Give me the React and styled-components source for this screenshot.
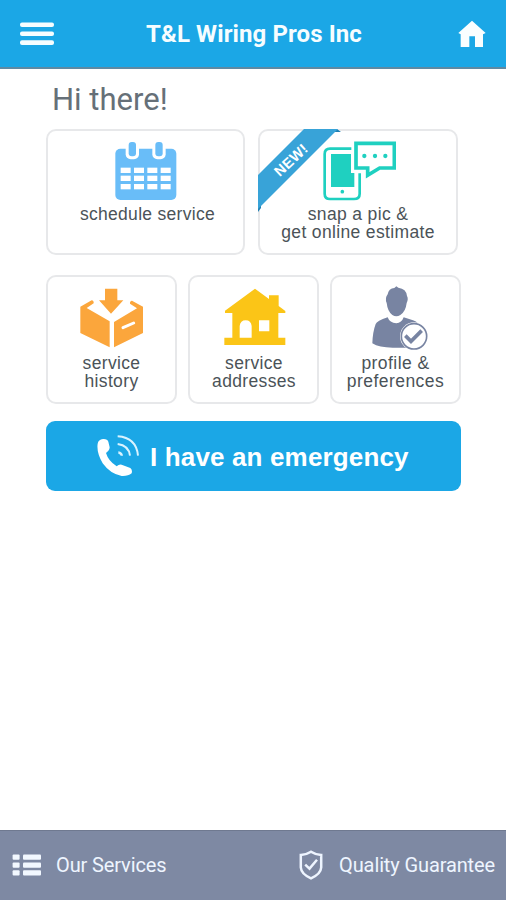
import React from 'react';
import styled, { createGlobalStyle } from 'styled-components';

const GlobalStyle = createGlobalStyle`
    * {
        box-sizing: border-box;
    }

    body {
        margin: 0;
        background: #ffffff;
    }
`;

const Screen = styled.div`
    display: flex;
    flex-direction: column;
    width: 506px;
    height: 900px;
    overflow: hidden;
    font-family: Roboto, sans-serif;
`;

const Header = styled.header`
    display: flex;
    align-items: center;
    justify-content: space-between;
    height: 69px;
    padding: 0 20px;
    background: #1ba7e6;
    border-bottom: 2px solid #5f8aa3;
`;

const Title = styled.h1`
    margin: 0 4px 0 0;
    font-size: 24px;
    line-height: 28px;
    font-weight: 700;
    letter-spacing: 0.1px;
    color: #f6fdff;
`;

const IconButton = styled.button`
    display: flex;
    padding: 0;
    border: 0;
    background: none;
`;

const Content = styled.main`
    flex: 1;
    padding: 13px 45px 0 46px;
`;

const Greeting = styled.h2`
    margin: 0 0 11px 6px;
    font-size: 31px;
    line-height: 36px;
    font-weight: 400;
    color: #667078;
`;

const CardRow = styled.div`
    display: grid;
    grid-template-columns: ${({ $columns }) => $columns};
    grid-auto-rows: ${({ $height }) => $height};
    gap: ${({ $gap }) => $gap};
    margin-bottom: ${({ $bottom }) => $bottom};
`;

const Card = styled.div`
    position: relative;
    display: flex;
    flex-direction: column;
    align-items: center;
    padding-top: ${({ $top }) => $top};
    border: 2px solid #e7e8ea;
    border-radius: 10px;
    background: #ffffff;

    > svg {
        flex-shrink: 0;
        margin-left: ${({ $nudge }) => $nudge || '0'};
    }
`;

const Label = styled.span`
    margin-top: ${({ $offset }) => $offset || '5px'};
    padding-left: ${({ $indent }) => $indent || '0'};
    font-family: "Liberation Sans", Arial, sans-serif;
    font-size: 17.5px;
    line-height: 17.5px;
    letter-spacing: ${({ $spacing }) => $spacing || '0.35px'};
    text-align: center;
    white-space: pre;
    color: #4b5358;
`;

const Ribbon = styled.div`
    position: absolute;
    top: -2px;
    left: -2px;
    width: 84px;
    height: 84px;

    span {
        position: absolute;
        top: 22px;
        left: 6px;
        width: 54px;
        font: 700 14.5px/18px "Liberation Sans", Arial, sans-serif;
        letter-spacing: 0.3px;
        text-align: center;
        color: #ffffff;
        transform: rotate(-43deg);
    }
`;

const EmergencyButton = styled.button`
    display: flex;
    align-items: center;
    width: 415px;
    height: 70px;
    padding: 0 0 0 51px;
    border: 0;
    border-radius: 9px;
    background: #1ba7e6;
    font: 700 26px/30px "Liberation Sans", Arial, sans-serif;
    letter-spacing: 0.15px;
    white-space: nowrap;
    color: #ffffff;

    span {
        margin-left: 11px;
        padding-top: 1px;
    }
`;

const Footer = styled.footer`
    display: flex;
    align-items: center;
    justify-content: space-between;
    height: 70px;
    padding: 0 11px 1px 12px;
    background: #7e89a3;
    border-top: 1px solid #6f7990;
`;

const FooterLink = styled.a`
    display: flex;
    align-items: center;
    gap: ${({ $gap }) => $gap};
    font-size: 20px;
    line-height: 24px;
    letter-spacing: -0.12px;
    color: #eef5ff;
`;

const MenuIcon = () => (
    <svg width="34" height="24" viewBox="0 0 34 24" fill="#f6fdff">
        <rect y="0.5" width="34" height="4.6" rx="2" />
        <rect y="9.4" width="34" height="4.6" rx="2" />
        <rect y="18.3" width="34" height="4.6" rx="2" />
    </svg>
);

const HomeIcon = () => (
    <svg width="28" height="28" viewBox="617 58 84 84" fill="#fafeff">
        <path d="M659 60L700 97L692 101V139H668V107H651V139H625V101L618 97Z" />
    </svg>
);

const CalendarIcon = () => (
    <svg width="62" height="60" viewBox="0 0 186 180">
        <rect x="1" y="23" width="183" height="154" rx="15" fill="#69bdf8" />
        {[52, 132].map(x => (
            <g key={x}>
                <rect x={x - 20} y="-6" width="40" height="61" rx="15" fill="#fff" />
                <rect x={x - 11} y="3" width="22" height="43" rx="9" fill="#69bdf8" />
            </g>
        ))}
        {[80, 104, 129].map(y => [17, 57, 97, 137].map(x => (
            <rect key={`${x}-${y}`} x={x} y={y} width="30" height="16" fill="#fff" />
        )))}
    </svg>
);

const SnapIcon = () => (
    <svg width="73" height="60" viewBox="219 61 219 180" fill="#1fd0c0">
        <path d="M304 84H240Q224 84 224 100V219Q224 235 240 235H312Q329 235 329 219V158" fill="none" stroke="#1fd0c0" strokeWidth="8" />
        <path d="M243 100H303V157H313V199H243Z" />
        <circle cx="277" cy="213" r="5.5" />
        <path d="M318 68H433V142H389L353 164V142H318Z" fill="#fff" stroke="#1fd0c0" strokeWidth="11" />
        <circle cx="343" cy="106" r="6.5" />
        <circle cx="375" cy="106" r="6.5" />
        <circle cx="406" cy="106" r="6.5" />
    </svg>
);

const BoxIcon = () => (
    <svg width="64" height="60" viewBox="118 60 192 180" fill="#fba63c">
        <path d="M193 62H230V97H248L211 137L175 97H193Z" />
        <path d="M119 116L153 97Q160 98 159 106L138 120L207 160V238L119 195Z" />
        <path d="M220 162L289 121L268 107Q267 99 274 98L307 116V195L220 238Z" />
        <path d="M247 179L279 165" stroke="#fff" strokeWidth="9" strokeLinecap="round" />
    </svg>
);

const HouseIcon = () => (
    <svg width="62" height="58" viewBox="122 58 186 174" fill="#fbc517">
        <path fillRule="evenodd" d="M215 60L257 91V80H286V112L306 127V133H285V207H306V229H123V207H147V133H125V126ZM169 207H205V172Q203 155 187 155Q171 155 169 172ZM227 155V188H258V155Z" />
    </svg>
);

const ProfileIcon = () => (
    <svg width="56" height="64" viewBox="143 52 168 192" fill="#7884a2">
        <path d="M190 77Q193 59 210 58L216 53L222 57Q246 60 248 82Q253 91 247 103Q244 129 228 139Q216 147 204 139Q190 129 187 103Q181 88 190 77Z" />
        <path d="M190 146Q196 163 216 164Q232 163 238 146L266 155Q286 160 287 183V237H205Q164 237 144 224Q145 190 154 166Q157 157 190 146Z" />
        <circle cx="269" cy="203" r="42" fill="#fff" />
        <circle cx="269" cy="203" r="38" fill="#fff" stroke="#7884a2" strokeWidth="5" />
        <path d="M243 201L260 218L292 186" fill="none" stroke="#7884a2" strokeWidth="11" />
    </svg>
);

const CallIcon = () => (
    <svg width="42" height="42" viewBox="170 70 126 126">
        <path d="M172 96Q174 84 188 82Q201 81 204 90L208 107Q208 116 197 124Q204 148 229 164Q236 157 244 159L270 169Q277 174 274 185Q263 194 244 193Q210 187 187 155Q168 122 172 96Z" fill="#fff" />
        <g fill="none" stroke="#d9f3ff" strokeWidth="6">
            <path d="M232 74Q288 78 293 132" />
            <path d="M232 97Q265 101 269 132" />
        </g>
        <path d="M234 119Q247 121 248 132L241 132Q240 127 234 126Z" fill="#d9f3ff" />
    </svg>
);

const ListIcon = () => (
    <svg width="29" height="22" viewBox="0 0 29 22" fill="#f2f8ff">
        {[0.5, 8.5, 16.3].map(y => (
            <g key={y}>
                <rect x="0.6" y={y} width="7" height="5.2" rx="1" />
                <rect x="11" y={y} width="18" height="5.2" rx="1" />
            </g>
        ))}
    </svg>
);

const ShieldIcon = () => (
    <svg width="24" height="30" viewBox="0 0 24 30" fill="none" stroke="#eef5ff">
        <path d="M12 1.8Q16.5 4.8 22.2 4.9V17.5Q21.8 24 12 28.3Q2.2 24 1.8 17.5V4.9Q7.5 4.8 12 1.8Z" strokeWidth="2.5" />
        <path d="M6.2 14.6L10.5 18.6L18 9.8" strokeWidth="2.5" />
    </svg>
);

const NewRibbon = () => (
    <Ribbon>
        <svg width="84" height="84" viewBox="0 0 84 84">
            <path d="M73 0H79L83 3H74ZM0 73V83L3 79V74Z" fill="#2180b3" />
            <path d="M46 0H80L0 80V46Z" fill="#38a3d8" />
        </svg>
        <span>NEW!</span>
    </Ribbon>
);

const App = () => {
    return (
        <React.Fragment>
            <GlobalStyle />
            <Screen>
                <Header>
                    <IconButton aria-label="Menu"><MenuIcon /></IconButton>
                    <Title>T&amp;L Wiring Pros Inc</Title>
                    <IconButton aria-label="Home"><HomeIcon /></IconButton>
                </Header>
                <Content>
                    <Greeting>Hi there!</Greeting>
                    <CardRow $columns="199px 200px" $height="126px" $gap="13px" $bottom="20px">
                        <Card $top="10px">
                            <CalendarIcon />
                            <Label $indent="4px" $spacing="0.3px">schedule service</Label>
                        </Card>
                        <Card $top="10px" $nudge="2px">
                            <NewRibbon />
                            <SnapIcon />
                            <Label>{'snap a pic &\nget online estimate'}</Label>
                        </Card>
                    </CardRow>
                    <CardRow $columns="131px 131px 131px" $height="129px" $gap="11px" $bottom="17px">
                        <Card $top="11px">
                            <BoxIcon />
                            <Label $offset="7px">{'service\nhistory'}</Label>
                        </Card>
                        <Card $top="11px" $nudge="2px">
                            <HouseIcon />
                            <Label $offset="9px" $indent="1px">{'service\naddresses'}</Label>
                        </Card>
                        <Card $top="9px" $nudge="9px">
                            <ProfileIcon />
                            <Label $spacing="0.45px">{'profile &\npreferences'}</Label>
                        </Card>
                    </CardRow>
                    <EmergencyButton>
                        <CallIcon />
                        <span>I have an emergency</span>
                    </EmergencyButton>
                </Content>
                <Footer>
                    <FooterLink $gap="15px"><ListIcon />Our Services</FooterLink>
                    <FooterLink $gap="16px"><ShieldIcon />Quality Guarantee</FooterLink>
                </Footer>
            </Screen>
        </React.Fragment>
    );
};

export default App;
